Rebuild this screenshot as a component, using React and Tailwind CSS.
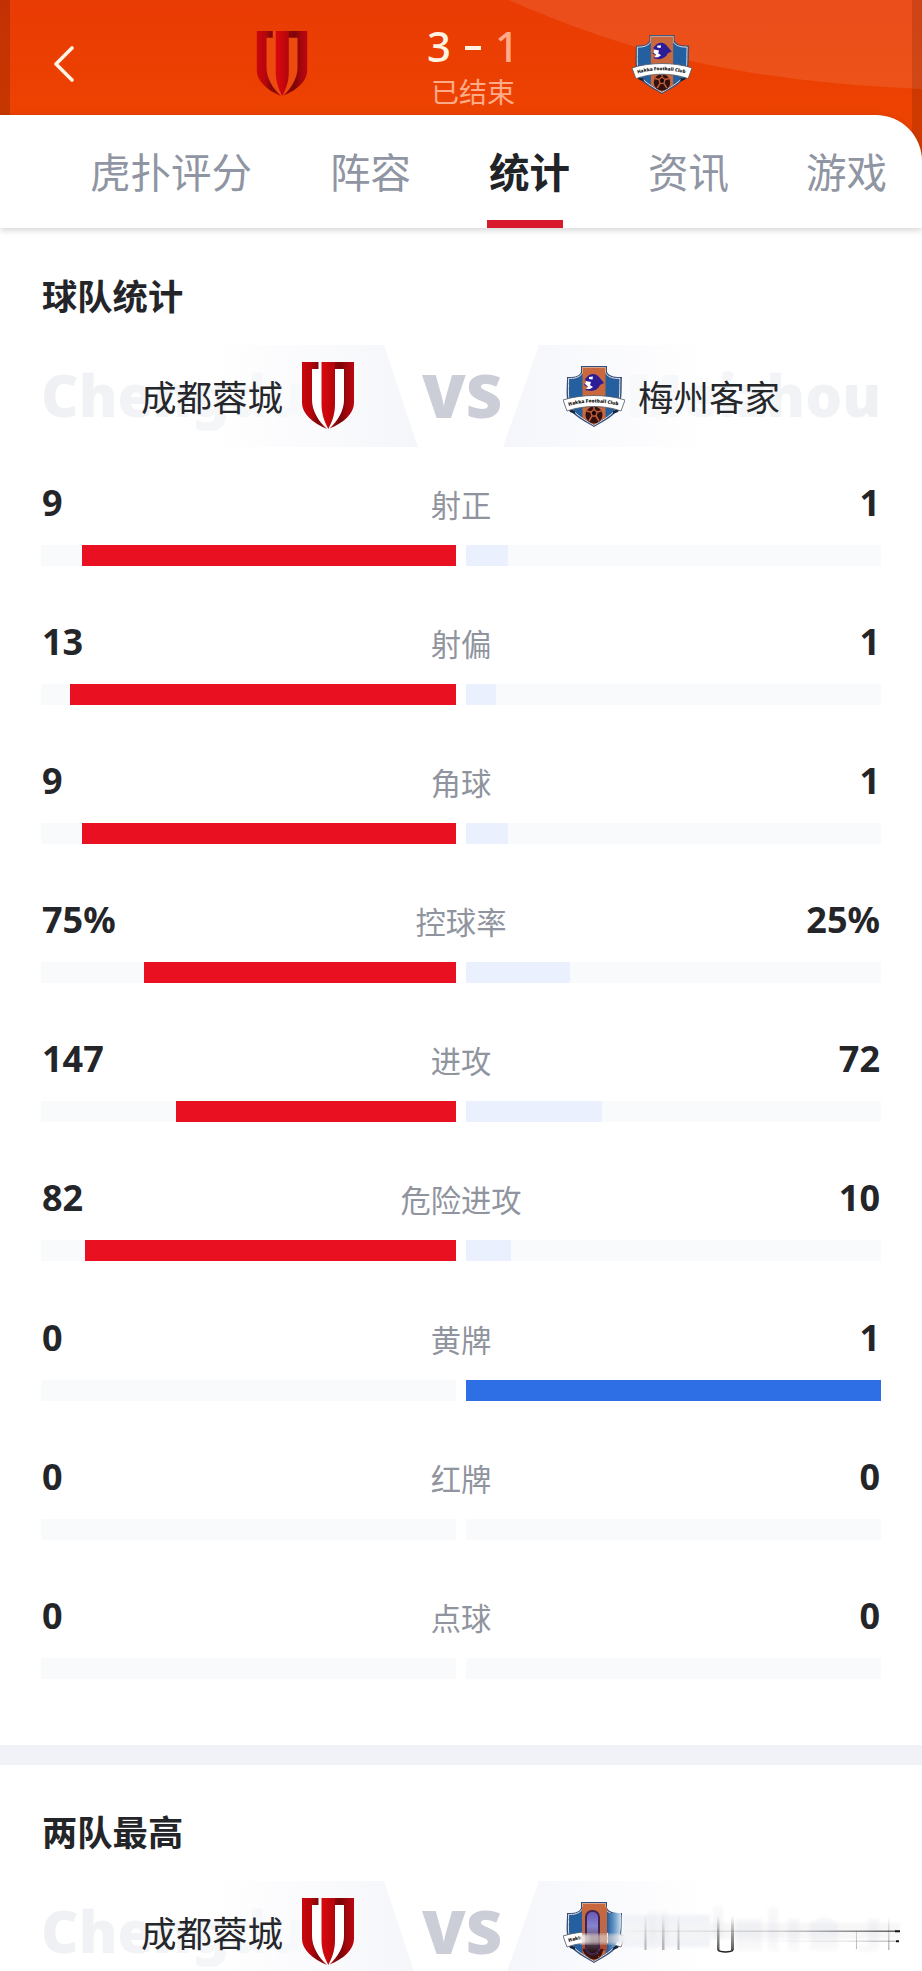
import React from 'react';

const tabs = [
  { name: '虎扑评分', pos: 'ml-[90px]' },
  { name: '阵容', pos: 'ml-[78px]' },
  { name: '统计', pos: 'ml-[78px]', active: true },
  { name: '资讯', pos: 'ml-[78px]' },
  { name: '游戏', pos: 'ml-[77px]' },
];

const stats = [
  { label: '射正', home: 9, away: 1 },
  { label: '射偏', home: 13, away: 1 },
  { label: '角球', home: 9, away: 1 },
  { label: '控球率', home: 75, away: 25, unit: '%' },
  { label: '进攻', home: 147, away: 72 },
  { label: '危险进攻', home: 82, away: 10 },
  { label: '黄牌', home: 0, away: 1 },
  { label: '红牌', home: 0, away: 0 },
  { label: '点球', home: 0, away: 0 },
];

function ChengduLogo({ id, hollow = '#fff', className }) {
  return (
    <svg viewBox="0 0 52 67" className={className}>
      <defs>
        <linearGradient id={`${id}-l`} x1="0" x2="1">
          <stop offset="0" stopColor="#c9080e" />
          <stop offset="0.35" stopColor="#b8060c" />
          <stop offset="0.6" stopColor="#84060a" />
          <stop offset="1" stopColor="#9a060b" />
        </linearGradient>
        <linearGradient id={`${id}-m`} x1="0" x2="1">
          <stop offset="0" stopColor="#d8090f" />
          <stop offset="0.5" stopColor="#c9070d" />
          <stop offset="1" stopColor="#b0060b" />
        </linearGradient>
        <linearGradient id={`${id}-r`} x1="0" x2="1">
          <stop offset="0" stopColor="#a4060b" />
          <stop offset="0.45" stopColor="#7a0508" />
          <stop offset="0.7" stopColor="#a1060c" />
          <stop offset="1" stopColor="#bb0710" />
        </linearGradient>
      </defs>
      <path d="M0 0H52V41C52 51 41 61 26 67C11 61 0 51 0 41Z" fill={hollow} />
      <path d="M0 0H16.500V7H10V38C10 48 16 59 25 67C10 61 0 51 0 41Z" fill={`url(#${id}-l)`} />
      <path d="M30 0H52V41C52 51 42 61 27.500 66.500C36 59 42 48 42 38V7H30Z" fill={`url(#${id}-r)`} />
      <path d="M19.500 0H33V42C33 52 30 60 26.300 67C22.500 60 19.500 52 19.500 42Z" fill={`url(#${id}-m)`} />
    </svg>
  );
}

function MeizhouLogo({ id, className }) {
  return (
    <svg viewBox="0 0 62 61" className={className}>
      <path d="M18 0H44V6C47 11 53 11 59 11C58 25 61 39 50 49C44 54 37 57 31 61C25 57 18 54 12 49C1 39 4 25 4 11C10 11 16 11 18 6Z" fill="#33507d" />
      <path d="M19.500 1.500H42.500V7C46 12 51 12.500 57 12.500C56 26 59 38 49 47.500C43 52.500 37 55.500 31 59.300C25 55.500 19 52.500 13 47.500C3 38 6 26 5.500 12.500C11 12.500 16 12 19.500 7Z" fill="#24609f" stroke="#e9dfdc" strokeWidth="1" />
      <path d="M19.500 1.500H42.500V51.500L31 59L19.500 51.500Z" fill="#c9683c" />
      <path d="M24 11C27 7 33 7 36 11L41 17L37 19C36 22 32 25 28 25L22 24L25 21L21 19L23 16L22 13Z" fill="#2c1c96" />
      <path d="M26 11L30 10.500L29.500 13.500L26 13ZM23 15L28 16L27 19L30 21L27 23L23 23L25 20.500L22 18Z" fill="#fff" />
      <circle cx="31" cy="49" r="8.500" fill="#32120f" />
      <path d="M28 46L31 43.500L34 46L33 50H29Z" fill="#150808" stroke="#c25a3b" strokeWidth="1.400" />
      <path d="M23.500 45L28 46M38.500 45L34 46M29 50L26 55M33 50L36 55M31 41V43" stroke="#c25a3b" strokeWidth="1.600" />
      <path d="M5 42L12 45V48L7 46ZM57 42L50 45V48L55 46Z" fill="#17243b" />
      <path d="M0 34C19 28 43 28 62 34L58 45C41 39 21 39 4 45Z" fill="#fff" stroke="#4d5662" strokeWidth="0.800" />
      <path id={`${id}-arc`} d="M4 40.500C21 35 41 35 60 41" fill="none" />
      <text fontSize="4.800" fontWeight="900" fill="#111" fontFamily="Noto Sans, sans-serif">
        <textPath href={`#${id}-arc`} startOffset="2">Hakka Football Club</textPath>
      </text>
    </svg>
  );
}

function Header() {
  return (
    <header className="relative h-[160px] overflow-hidden bg-linear-to-b from-[#e93b04] to-[#ee4500]">
      <svg className="absolute inset-0 h-full w-full" viewBox="0 0 922 160">
        <path d="M508 0C594 36 700 80 922 89V0Z" fill="#fff" opacity="0.095" />
        <rect width="10" height="160" fill="#000" opacity="0.160" />
        <rect x="912" width="10" height="160" fill="#000" opacity="0.120" />
      </svg>
      <div className="relative flex h-[115px] items-start">
        <svg className="mt-[46px] ml-[54px] h-[36px] w-[20px]" viewBox="0 0 20 36" fill="none" stroke="#fff5e4" strokeWidth="3.600" strokeLinecap="round" strokeLinejoin="round">
          <path d="M18 2L2 18L18 34" />
        </svg>
        <ChengduLogo id="top" hollow="#ed4a10" className="mt-[31px] ml-[182px] h-[65px] w-[52px]" />
        <div className="mt-[24px] ml-[108px] w-[114px] text-center text-[#ffab88]">
          <div className="flex h-[43px] items-center justify-center text-[42px] leading-[43px] font-medium text-[#fff3e2]">
            <span>3</span>
            <span className="mx-[14px] mt-[5px] h-[4px] w-[16px] bg-[#fff3e2]" />
            <span className="text-[#ffab88]">1</span>
          </div>
          <div className="mt-[5px] text-[28px] leading-[40px]">已结束</div>
        </div>
        <MeizhouLogo id="top-away" className="mt-[34px] ml-[102px] h-[61px] w-[60px]" />
      </div>
    </header>
  );
}

function Tabs() {
  return (
    <nav className="relative -mt-[45px] flex h-[113px] rounded-tr-[46px] bg-white text-[40.500px] leading-[58px] whitespace-nowrap text-[#8f95a2] shadow-[0_2px_7px_rgba(0,0,0,0.18)]">
      {tabs.map((tab) => (
        <button key={tab.name} className={`relative pt-[29px] pb-[26px] ${tab.pos} ${tab.active ? 'font-bold text-[#222327]' : ''}`}>
          {tab.name}
          {tab.active && <span className="absolute bottom-0 -left-[2px] h-[8px] w-[76px] bg-[#d91a2c]" />}
        </button>
      ))}
    </nav>
  );
}

// Row with both teams; `smeared` swaps the away name for the streaked remains
function Versus({ id, smeared }) {
  return (
    <div className="relative flex h-[102px] items-center">
      <svg className="absolute inset-0 h-full w-full" viewBox="0 0 922 102">
        <defs>
          <linearGradient id={`${id}-bl`} x1="0" x2="1">
            <stop offset="0" stopColor="#f5f6fa" stopOpacity="0" />
            <stop offset="1" stopColor="#f5f6fa" />
          </linearGradient>
          <linearGradient id={`${id}-br`} x1="0" x2="1">
            <stop offset="0" stopColor="#f5f6fb" />
            <stop offset="1" stopColor="#f5f6fb" stopOpacity="0" />
          </linearGradient>
        </defs>
        <path d="M210 0H384L418 102H210Z" fill={`url(#${id}-bl)`} />
        <path d="M539 0H710V102H503Z" fill={`url(#${id}-br)`} />
      </svg>
      <div className="absolute top-[10px] left-[41px] bg-linear-to-r from-[#eff0f3] to-[#f8f9fb] bg-clip-text text-[58px] leading-[80px] font-black text-transparent">Chengdu</div>
      {!smeared && (
        <div className="absolute top-[10px] right-[41px] bg-linear-to-l from-[#eff0f3] to-[#f8f9fb] bg-clip-text text-[58px] leading-[80px] font-black text-transparent">Meizhou</div>
      )}
      <div className="relative ml-[141px] w-[143px] pt-[3px] text-[35.500px] whitespace-nowrap text-[#26272b]">成都蓉城</div>
      <ChengduLogo id={`${id}-home`} className="relative mb-[2px] ml-[18px] h-[67px] w-[52px]" />
      <div className="relative ml-[68px] w-[82px] origin-left scale-x-105 pb-[2px] text-[60px] leading-[82px] font-black text-[#cbcdd7]">VS</div>
      <MeizhouLogo id={`${id}-away`} className="relative ml-[59px] h-[61px] w-[62px]" />
      {smeared ? <Smear /> : <div className="relative ml-[13px] pt-[3px] text-[35.500px] text-[#26272b]">梅州客家</div>}
    </div>
  );
}

function Smear() {
  return (
    <svg className="absolute top-0 left-[550px] h-[91px] w-[372px]" viewBox="0 0 372 91">
      <defs>
        <linearGradient id="fade-x" x1="0" x2="1">
          <stop offset="0" stopColor="#333" stopOpacity="0" />
          <stop offset="0.600" stopColor="#333" stopOpacity="0.200" />
          <stop offset="1" stopColor="#222" stopOpacity="0.700" />
        </linearGradient>
        <linearGradient id="fade-y" x1="0" y1="0" x2="0" y2="1">
          <stop offset="0" stopColor="#222" stopOpacity="0" />
          <stop offset="1" stopColor="#333" stopOpacity="0.350" />
        </linearGradient>
        <linearGradient id="hook" x1="0" y1="0" x2="0" y2="1">
          <stop offset="0" stopColor="#222" stopOpacity="0" />
          <stop offset="1" stopColor="#222" stopOpacity="0.750" />
        </linearGradient>
        <linearGradient id="ghost" x1="0" y1="0" x2="0" y2="1">
          <stop offset="0" stopColor="#eeeff3" stopOpacity="0.600" />
          <stop offset="0.600" stopColor="#e9eaee" />
          <stop offset="1" stopColor="#f3f3f5" stopOpacity="0.600" />
        </linearGradient>
        <linearGradient id="orange" x1="0" y1="0" x2="0" y2="1">
          <stop offset="0" stopColor="#c9683c" />
          <stop offset="0.600" stopColor="#b9694f" />
          <stop offset="1" stopColor="#a4442c" />
        </linearGradient>
        <linearGradient id="core" x1="0" y1="0" x2="0" y2="1">
          <stop offset="0" stopColor="#6a55b5" />
          <stop offset="0.350" stopColor="#8583cf" />
          <stop offset="0.650" stopColor="#6b5468" />
          <stop offset="1" stopColor="#1c0c0c" />
        </linearGradient>
        <linearGradient id="blue" x1="0" x2="1">
          <stop offset="0" stopColor="#2c64a0" />
          <stop offset="0.500" stopColor="#6b9cc9" />
          <stop offset="1" stopColor="#cfdfee" />
        </linearGradient>
        <linearGradient id="wash" x1="0" x2="1">
          <stop offset="0" stopColor="#fff" />
          <stop offset="0.250" stopColor="#e9dcd8" stopOpacity="0.600" />
          <stop offset="0.700" stopColor="#e4ddd9" stopOpacity="0.600" />
          <stop offset="1" stopColor="#e7eff7" />
        </linearGradient>
        <filter id="soft"><feGaussianBlur stdDeviation="1.500" /></filter>
      </defs>
      <path d="M58 32H71C71 45 72 57 63 67L58 70Z" fill="url(#blue)" />
      <rect x="32" y="26" width="25" height="44" fill="url(#orange)" />
      <path d="M34 68C36 78 50 78 52 68" fill="none" stroke="#3a1512" strokeWidth="3" />
      <rect x="36" y="30" width="13" height="43" rx="6" fill="url(#core)" stroke="#43244f" strokeWidth="2" />
      <rect x="30" y="53" width="46" height="10" fill="url(#wash)" filter="url(#soft)" />
      <g filter="url(#soft)">
        <path d="M73 34H160V66H73Z" fill="#f1f3f8" />
        <path d="M73 42H350V58H73Z" fill="#f3f3f5" opacity="0.700" />
        <path d="M98 30H107V68H98ZM110 30H118V68H110ZM163 25H173V58H163ZM186 38H212V71H186ZM218 26H228V71H218ZM238 38H249V71H238ZM260 42Q274 32 288 42V68Q274 74 260 68ZM296 38H305V68Q314 74 329 70V38H318V64H305V38Z" fill="url(#ghost)" opacity="0.600" />
      </g>
      <path d="M94.500 34h2v35h-2ZM112 34h2.500v35h-2.500ZM127.500 34h2v35h-2ZM306 50h1v18h-1ZM338 36h1.500v33h-1.500Z" fill="url(#fade-y)" />
      <path d="M167 35h2.500v34h-2.500ZM181 35h3v34h-3Z" fill="url(#hook)" />
      <path d="M168 69C170 71.500 181 71.500 183 69" fill="none" stroke="#222" strokeWidth="1.500" />
      <rect x="60" y="49.500" width="286" height="1.500" fill="url(#fade-x)" />
      <rect x="200" y="59.500" width="146" height="1.500" fill="url(#fade-x)" opacity="0.400" />
      <path d="M345 50.200h5M346 60.200h3" stroke="#111" strokeWidth="2" />
    </svg>
  );
}

function StatRow({ label, home, away, unit = '' }) {
  const total = home + away;
  const homePct = total ? (home / total) * 100 : 0;
  const awayPct = total ? (away / total) * 100 : 0;
  return (
    <div className="h-[139.100px]">
      <div className="grid h-[67px] grid-cols-[1fr_auto_1fr] items-start px-px pt-px leading-[48px]">
        <span className="text-[36px] font-bold text-[#242529]">{home}{unit}</span>
        <span className="mt-[3px] text-[30.300px] text-[#8f949e]">{label}</span>
        <span className="text-right text-[36px] font-bold text-[#242529]">{away}{unit}</span>
      </div>
      <div className="grid grid-cols-2 gap-[10px]">
        <div className="flex h-[21px] justify-end bg-[#f9fafc]">
          <div className="bg-[#e91121]" style={{ width: homePct ? `calc(${homePct}% + 1px)` : 0 }} />
        </div>
        <div className="flex h-[21px] bg-[#f9fafc]">
          <div className={away > home ? 'bg-[#2f6fe6]' : 'bg-[#ebf0fe]'} style={{ width: `${awayPct}%` }} />
        </div>
      </div>
    </div>
  );
}

function App() {
  return (
    <div className="h-[1971px] w-[922px] overflow-hidden bg-white font-['Noto_Sans','Noto_Sans_CJK_SC',sans-serif]">
      <Header />
      <Tabs />
      <section className="h-[1517px] pt-[42px]">
        <h2 className="ml-[42px] text-[35.300px] leading-[52px] font-bold text-[#242529]">球队统计</h2>
        <div className="mt-[23px]">
          <Versus id="stats" />
        </div>
        <div className="mt-[31px] px-[41px]">
          {stats.map((s) => (
            <StatRow key={s.label} {...s} />
          ))}
        </div>
      </section>
      <div className="h-[20px] bg-[#f1f2f8]" />
      <section className="pt-[41px]">
        <h2 className="ml-[42px] text-[35.300px] leading-[52px] font-bold text-[#242529]">两队最高</h2>
        <div className="mt-[23px]">
          <Versus id="best" smeared />
        </div>
      </section>
    </div>
  );
}

export default App;
